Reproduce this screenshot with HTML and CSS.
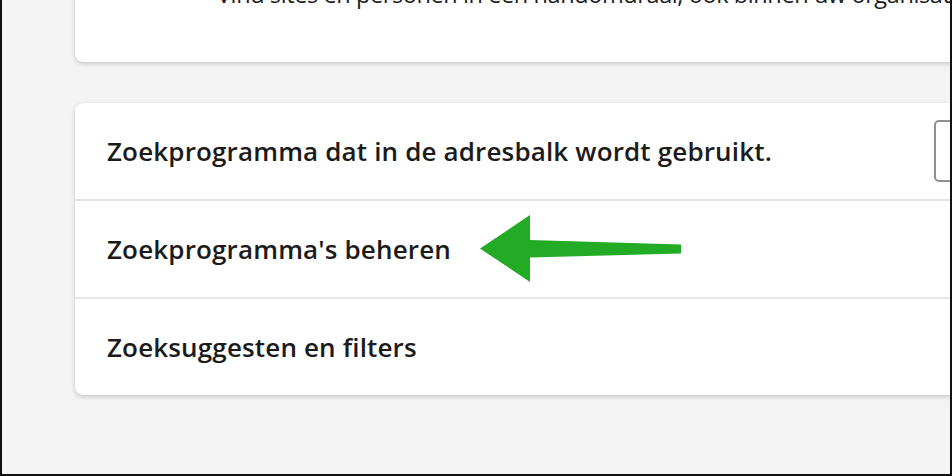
FILE: index.html
```html
<!DOCTYPE html>
<html lang="nl">
<head>
<meta charset="utf-8">
<title>Zoekprogramma</title>
<link rel="stylesheet" href="styles.css">
</head>
<body>
<div class="frame">
  <section class="card card-top">
    <p class="desc">Vind sites en personen in een handomdraai, ook binnen uw organisatie</p>
  </section>
  <section class="card card-list">
    <div class="row">
      <span class="label">Zoekprogramma dat in de adresbalk wordt gebruikt.</span>
      <span class="select"></span>
    </div>
    <div class="row row-arrow">
      <span class="label">Zoekprogramma's beheren</span>
      <svg class="arrow" width="210" height="70" viewBox="0 0 210 70" aria-hidden="true">
        <polygon points="0,33.5 50,0 50,25 201,29.5 201,38.5 50,42.5 50,67" fill="#23ab25"/>
      </svg>
    </div>
    <div class="row">
      <span class="label">Zoeksuggesten en filters</span>
    </div>
  </section>
</div>
</body>
</html>
```

FILE: styles.css
```css
html, body {
  margin: 0;
  padding: 0;
}
body {
  width: 952px;
  height: 476px;
  overflow: hidden;
  font-family: "Open Sans", "Noto Sans", sans-serif;
  color: #1b1b1b;
}
.frame {
  box-sizing: border-box;
  width: 952px;
  height: 476px;
  overflow: hidden;
  background: #f3f3f3;
  border-left: 2px solid #111;
  border-right: 2px solid #111;
  border-bottom: 2px solid #111;
  padding-left: 73px;
}
.card {
  width: 1000px;
  background: #fff;
  border-radius: 8px;
  box-shadow: 0 2px 4px rgba(0, 0, 0, 0.16), 0 0 1px rgba(0, 0, 0, 0.12);
}
.card-top {
  margin-top: -40px;
  height: 102px;
  box-sizing: border-box;
  padding: 19px 0 0 142px;
}
.desc {
  margin: 0;
  font-size: 23.5px;
  font-weight: 400;
  line-height: 30px;
  white-space: nowrap;
  letter-spacing: -0.4px;
}
.card-list {
  margin-top: 41px;
}
.row {
  display: flex;
  align-items: center;
  height: 96px;
  padding-left: 32px;
  border-top: 2px solid #e5e5e5;
  position: relative;
}
.row:first-child {
  border-top: none;
}
.label {
  font-size: 26px;
  font-weight: 600;
  letter-spacing: 0.15px;
  white-space: nowrap;
}
.select {
  margin-left: auto;
  margin-right: 17px;
  width: 120px;
  height: 58px;
  border: 2px solid #8f8f8f;
  border-radius: 5px;
}
.arrow {
  position: absolute;
  left: 405px;
  top: 14px;
}
```
